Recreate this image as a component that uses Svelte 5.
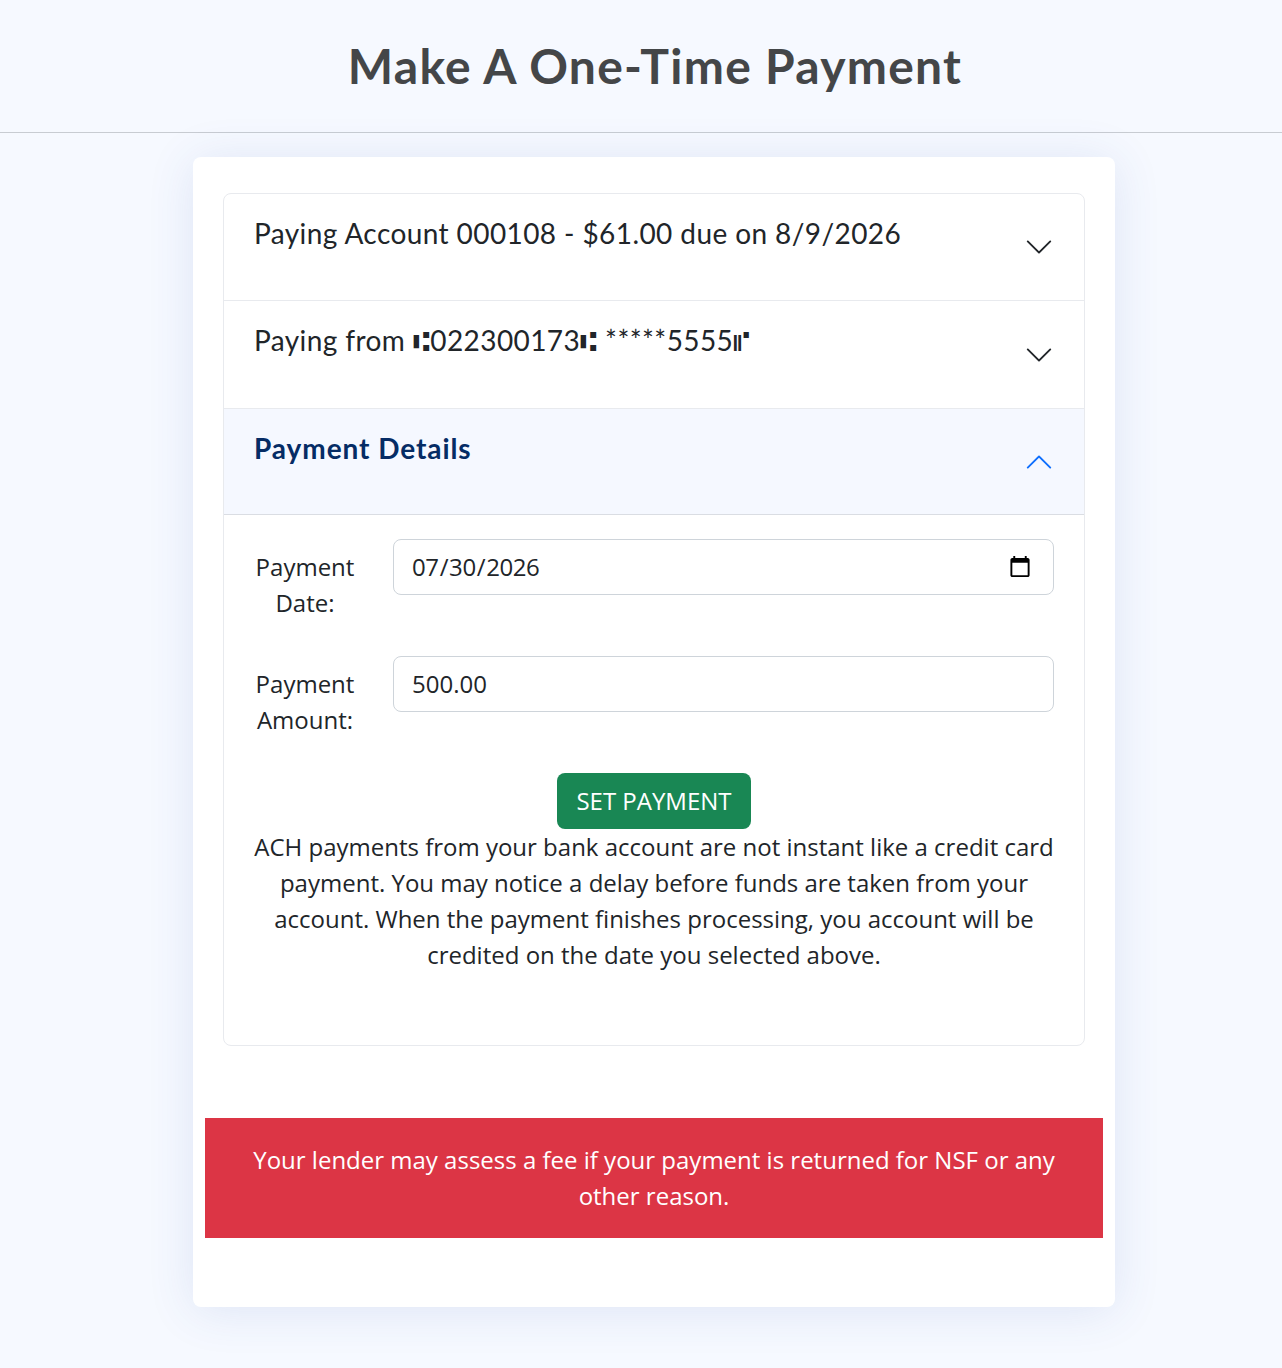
<script>
	const chevron = 'M1.646 4.646a.5.5 0 0 1 .708 0L8 10.293l5.646-5.647a.5.5 0 0 1 .708.708l-6 6a.5.5 0 0 1-.708 0l-6-6a.5.5 0 0 1 0-.708z';

	let paymentDate = '2026-07-30';
	let paymentAmount = '500.00';
</script>

<header class="page-header">
	<h1>Make A One-Time Payment</h1>
</header>

<main class="card">
	<div class="accordion">
		<div class="item">
			<span class="item-title">Paying Account 000108 - $61.00 due on 8/9/2026</span>
			<svg class="chevron" viewBox="0 0 16 16" aria-hidden="true"><path fill-rule="evenodd" d={chevron} /></svg>
		</div>
		<div class="item">
			<span class="item-title">Paying from ⑆022300173⑆ *****5555⑈</span>
			<svg class="chevron" viewBox="0 0 16 16" aria-hidden="true"><path fill-rule="evenodd" d={chevron} /></svg>
		</div>
		<div class="item active">
			<span class="item-title">Payment Details</span>
			<svg class="chevron up" viewBox="0 0 16 16" aria-hidden="true"><path fill-rule="evenodd" d={chevron} /></svg>
		</div>
		<div class="details">
			<div class="form-row">
				<label for="payment-date">Payment Date:</label>
				<input id="payment-date" class="date-input" type="date" bind:value={paymentDate} />
			</div>
			<div class="form-row">
				<label for="payment-amount">Payment Amount:</label>
				<input id="payment-amount" class="amount-input" type="text" bind:value={paymentAmount} />
			</div>
			<div class="actions">
				<button type="button" class="set-payment">SET PAYMENT</button>
			</div>
			<p class="notice">ACH payments from your bank account are not instant like a credit card payment. You may notice a delay before funds are taken from your account. When the payment finishes processing, you account will be credited on the date you selected above.</p>
		</div>
	</div>

	<div class="alert">Your lender may assess a fee if your payment is returned for NSF or any other reason.</div>
</main>

<style>
	:global(body) {
		background: #f6f9ff;
		color: #212529;
		font-family: "Open Sans", "Noto Sans", sans-serif;
		font-size: 24px;
		line-height: 36px;
	}

	.page-header {
		height: 132px;
		border-bottom: 1px solid #c8ccd2;
		display: flex;
		align-items: center;
		justify-content: center;
		padding-left: 28px;
	}

	/* Lato stands in for the rounded heading face, spaced out to its width */
	h1 {
		margin: 0;
		font-family: "Lato", "Open Sans", sans-serif;
		font-size: 48px;
		font-weight: 700;
		line-height: 1.2;
		letter-spacing: 1.27px;
		color: #444648;
	}

	.card {
		box-sizing: border-box;
		width: 922px;
		margin: 24px 0 61px 193px;
		padding: 36px 12px 69px;
		background: #fff;
		border-radius: 8px;
		box-shadow: 0 4px 48px rgba(50, 80, 170, 0.12);
	}

	.accordion {
		margin: 0 18px 72px;
		border: 1px solid #e8eaee;
		border-radius: 8px;
		overflow: hidden;
	}

	.item {
		box-sizing: border-box;
		height: 107px;
		padding: 22px 30px 0;
		display: flex;
		justify-content: space-between;
		border-bottom: 1px solid #e8eaee;
		font-family: "Lato", "Open Sans", sans-serif;
		font-size: 28px;
		letter-spacing: 0.41px;
	}

	.item + .item {
		height: 108px;
	}

	.item.active {
		height: 106px;
		background: #f5f8ff;
		border-bottom-color: #dadde3;
		color: #052c65;
		font-weight: 700;
		letter-spacing: 0.93px;
	}

	.chevron {
		width: 30px;
		height: 30px;
		margin-top: 16px;
		fill: #212529;
		flex: none;
	}

	.item + .item .chevron {
		margin-top: 17px;
	}

	.item + .item .chevron.up {
		margin-top: 16px;
		fill: #0d6efd;
		transform: rotate(180deg);
	}

	.item-title {
		margin-top: -1px;
	}

	.details {
		padding: 24px 30px;
	}

	.form-row {
		display: grid;
		grid-template-columns: 102px 1fr;
		column-gap: 37px;
		align-items: start;
		margin-bottom: 35px;
	}

	label {
		padding-top: 10px;
		text-align: center;
	}

	input {
		box-sizing: border-box;
		width: 100%;
		height: 56px;
		padding: 0 18px;
		border: 1px solid #ced4da;
		border-radius: 8px;
		background: #fff;
		color: #212529;
		font: inherit;
	}

	.date-input {
		padding: 0 19px 0 17px;
		letter-spacing: -0.4px;
	}

	.amount-input {
		padding-bottom: 2px;
	}

	.actions {
		display: flex;
		justify-content: center;
	}

	.set-payment {
		height: 56px;
		padding: 0 19px;
		border: 0;
		border-radius: 8px;
		background: #198754;
		color: #fff;
		font: inherit;
	}

	.notice {
		margin: 0 0 48px;
		text-align: center;
	}

	.alert {
		padding: 24px 36px;
		background: #dc3545;
		color: #fff;
		text-align: center;
	}
</style>
